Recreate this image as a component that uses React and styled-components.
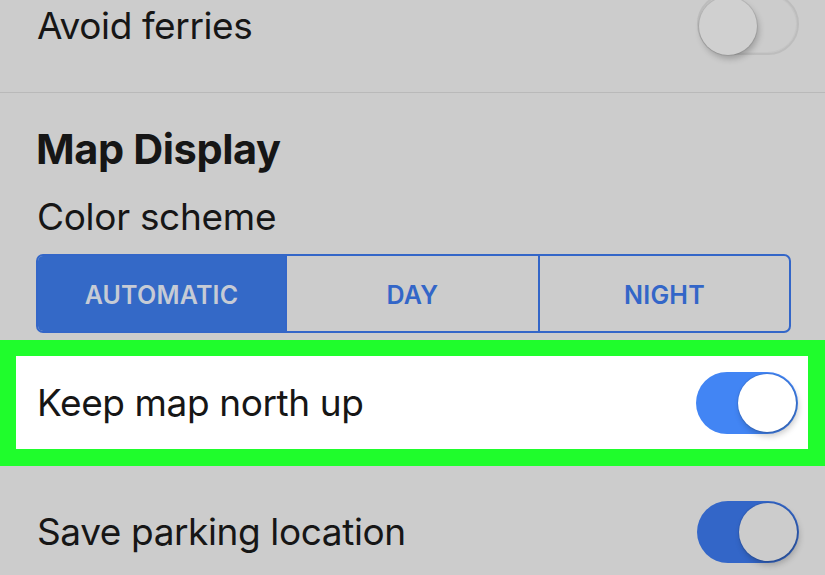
import React from "react";
import styled, { createGlobalStyle } from "styled-components";

const Global = createGlobalStyle`
  html, body { margin: 0; padding: 0; background: #cccccc; }
  body { font-family: Inter, "Noto Sans", sans-serif; color: #161616; overflow: hidden; }
`;

const Page = styled.div`
  width: 825px;
  height: 575px;
  overflow: hidden;
  background: #cccccc;
`;

const List = styled.div`
  display: flex;
  flex-direction: column;
  margin-top: -7px;
`;

const Row = styled.div`
  display: flex;
  align-items: center;
  justify-content: space-between;
  padding: ${(p) => p.$pad || "0"};
  padding-left: ${(p) => p.$left || "37px"};
  padding-right: ${(p) => p.$right || "26px"};
  background: ${(p) => p.$bg || "transparent"};
`;

const Label = styled.span`
  font-size: 37px;
  font-weight: 400;
  letter-spacing: -0.4px;
  line-height: 44px;
  color: #161616;
  margin-top: ${(p) => p.$nudge || "0"};
`;

const Divider = styled.div`
  height: 1px;
  background: #b9b9b9;
`;

const Section = styled.div`
  display: flex;
  flex-direction: column;
  padding: 0 34px 0 36px;
`;

const Heading = styled.h2`
  margin: 0;
  font-size: 41.5px;
  font-weight: 700;
  letter-spacing: -0.4px;
  line-height: 48px;
  margin-top: 32px;
`;

const SubLabel = styled.div`
  font-size: 37px;
  font-weight: 400;
  letter-spacing: -0.3px;
  line-height: 44px;
  margin-top: 22px;
  margin-left: 1px;
`;

const Segmented = styled.div`
  display: grid;
  grid-template-columns: 247px 253px 1fr;
  height: 79px;
  margin-top: 15px;
  border: 2px solid #3366c8;
  border-radius: 7px;
  overflow: hidden;
  box-sizing: border-box;
`;

const Segment = styled.div`
  display: flex;
  align-items: center;
  justify-content: center;
  padding-top: 3px;
  font-size: 25px;
  font-weight: 600;
  letter-spacing: 0.2px;
  color: ${(p) => (p.$active ? "#c6cbd5" : "#3366c8")};
  background: ${(p) => (p.$active ? "#3469c7" : "transparent")};
  border-left: ${(p) => (p.$first ? "none" : "2px solid #3366c8")};
`;

const Highlight = styled.div`
  margin-top: 7px;
  background: #1ffd2c;
  padding: 16px 17px 17px 16px;
`;

const Track = styled.div`
  position: relative;
  width: 102px;
  height: 62px;
  border-radius: 31px;
  box-sizing: border-box;
  flex-shrink: 0;
  background: ${(p) => p.$color};
  border: ${(p) => (p.$on ? "none" : "2px solid #bdbdbd")};
  box-shadow: ${(p) => (p.$on ? "none" : "inset 0 0 0 1px #c6c6c6")};
`;

const Knob = styled.div`
  position: absolute;
  top: 2px;
  left: ${(p) => (p.$on ? "42px" : "0px")};
  width: 58px;
  height: 58px;
  box-sizing: border-box;
  border-radius: 50%;
  background: ${(p) => p.$color};
  box-shadow: 2px 4px 6px rgba(0, 0, 0, 0.22), 0 0 0 1px rgba(0, 0, 0, 0.08);
`;

function Toggle({ on, track, knob }) {
  return (
    <Track $on={on} $color={track}>
      <Knob $on={on} $color={knob} />
    </Track>
  );
}

export default function App() {
  return (
    <Page>
      <Global />
      <List>
        <Row $pad="0 0 37px 0">
          <Label $nudge="4px">Avoid ferries</Label>
          <Toggle on={false} track="#cccccc" knob="#d0d0d0" />
        </Row>
        <Divider />
        <Section>
          <Heading>Map Display</Heading>
          <SubLabel>Color scheme</SubLabel>
          <Segmented>
            <Segment $active $first>AUTOMATIC</Segment>
            <Segment>DAY</Segment>
            <Segment>NIGHT</Segment>
          </Segmented>
        </Section>
        <Highlight>
          <Row $pad="16px 0 15px 0" $bg="#ffffff" $left="21px" $right="10px">
            <Label>Keep map north up</Label>
            <Toggle on track="#4285f4" knob="#ffffff" />
          </Row>
        </Highlight>
        <Row $pad="35px 0 0 0">
          <Label>Save parking location</Label>
          <Toggle on track="#3366c8" knob="#cccccc" />
        </Row>
      </List>
    </Page>
  );
}
